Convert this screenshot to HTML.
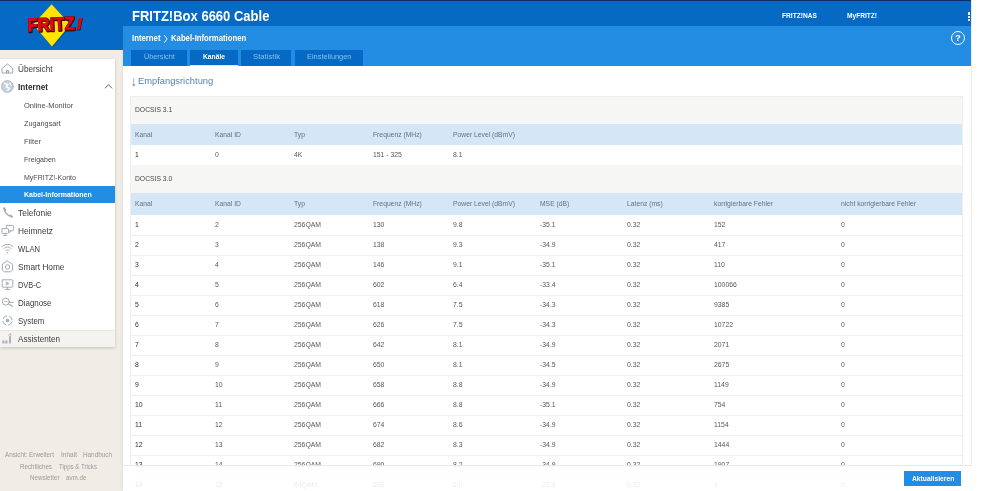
<!DOCTYPE html>
<html lang="de"><head><meta charset="utf-8"><title>FRITZ!Box 6660 Cable</title>
<style>
html,body{margin:0;padding:0}
body{width:999px;height:491px;overflow:hidden;background:#fff;position:relative;font-family:"Liberation Sans",sans-serif}
.t{position:absolute;white-space:nowrap;transform-origin:0 50%;display:block}
.abs{position:absolute}
#root{position:absolute;left:0;top:0;width:999px;height:491px;will-change:transform}
</style></head><body><div id="root">

<div class="abs" style="left:0;top:0;width:972px;height:491px;background:#f0ede7"></div>
<div class="abs" style="left:0;top:0;width:972px;height:50px;background:#066ac4"></div>
<div class="abs" style="left:0;top:0;width:972px;height:1px;background:#0c2f63"></div>
<div class="abs" style="left:123px;top:26.3px;width:849px;height:465px;background:#fff;box-shadow:-1px 0 2px rgba(120,110,90,.10)"></div>
<div class="abs" style="left:123px;top:26.3px;width:849px;height:40.1px;background:#238de3"></div>
<div class="abs" style="left:971.4px;top:0;width:28px;height:491px;background:#fff;border-left:1px solid #efebe7;box-sizing:border-box"></div>
<svg class="abs" style="left:20px;top:1px" width="70" height="49" viewBox="20 1 70 49">
<polygon points="52.6,5.6 71.5,25.4 53,47.6 34.2,25.4" fill="#0a3f78" opacity=".55"/>
<polygon points="51.6,4.3 70.3,24.4 52,46.4 33.2,24.4" fill="#ffe500"/>
<g font-family="Liberation Sans, sans-serif" font-weight="bold" stroke-linejoin="round">
<g transform="translate(27.8,31.6) rotate(-2.5)">
<text x="0.5" y="0.6" font-size="18.6" textLength="47.2" lengthAdjust="spacingAndGlyphs" fill="#3a0508" stroke="#3a0508" stroke-width="2.1">FRITZ</text>
<text x="0" y="0" font-size="18.6" textLength="47.2" lengthAdjust="spacingAndGlyphs" fill="#e30613" stroke="#e30613" stroke-width=".6">FRITZ</text>
</g>
<g transform="translate(76.2,29) rotate(-2.5) skewX(-12)">
<text x="0.4" y="0.5" font-size="15" fill="#3a0508" stroke="#3a0508" stroke-width="1.7">!</text>
<text x="0" y="0" font-size="15" fill="#e30613" stroke="#e30613" stroke-width="1.1">!</text>
</g></g></svg>
<span class="t" style="left:131.60px;top:6.77px;font-size:14.20px;line-height:18.46px;color:#fff;font-weight:bold;transform:scaleX(0.9172);">FRITZ!Box 6660 Cable</span>
<span class="t" style="left:782.00px;top:10.96px;font-size:7.60px;line-height:9.88px;color:#fff;font-weight:bold;transform:scaleX(0.8728);">FRITZ!NAS</span>
<span class="t" style="left:846.70px;top:10.96px;font-size:7.60px;line-height:9.88px;color:#fff;font-weight:bold;transform:scaleX(0.8667);">MyFRITZ!</span>
<div class="abs" style="left:967.6px;top:12.2px;width:2.4px;height:2.4px;background:#fff;border-radius:0.6px"></div>
<div class="abs" style="left:967.6px;top:15.6px;width:2.4px;height:2.4px;background:#fff;border-radius:0.6px"></div>
<div class="abs" style="left:967.6px;top:19.0px;width:2.4px;height:2.4px;background:#fff;border-radius:0.6px"></div>
<span class="t" style="left:131.70px;top:33.14px;font-size:8.40px;line-height:10.92px;color:#fff;font-weight:bold;transform:scaleX(0.9286);">Internet</span>
<svg class="abs" style="left:163px;top:33.5px" width="6" height="10" viewBox="0 0 6 10"><path d="M1.2 1.2 L4.2 5 L1.2 8.8" fill="none" stroke="#fff" stroke-width="0.9"/></svg>
<span class="t" style="left:170.80px;top:33.14px;font-size:8.40px;line-height:10.92px;color:#fff;font-weight:bold;transform:scaleX(0.9233);">Kabel-Informationen</span>
<div class="abs" style="left:950.5px;top:31px;width:12px;height:12px;border:1.3px solid #fff;border-radius:50%;"></div>
<span class="t" style="left:954.90px;top:32.12px;font-size:9.50px;line-height:12.35px;color:#fff;font-weight:bold;">?</span>
<div class="abs" style="left:131.0px;top:50.2px;width:56.3px;height:16px;background:#066ac4;"></div>
<div class="abs" style="left:190.3px;top:50.2px;width:47.4px;height:16px;background:#066ac4;box-shadow:inset 0 -1px 0 #d8f0e0;"></div>
<div class="abs" style="left:241.0px;top:50.2px;width:50.3px;height:16px;background:#066ac4;"></div>
<div class="abs" style="left:295.0px;top:50.2px;width:67.7px;height:16px;background:#066ac4;"></div>
<span class="t" style="left:143.80px;top:51.93px;font-size:7.80px;line-height:10.14px;color:#86c0ef;transform:scaleX(0.9319);">Übersicht</span>
<span class="t" style="left:203.00px;top:51.93px;font-size:7.80px;line-height:10.14px;color:#fff;font-weight:bold;transform:scaleX(0.8602);">Kanäle</span>
<span class="t" style="left:252.65px;top:51.93px;font-size:7.80px;line-height:10.14px;color:#86c0ef;transform:scaleX(0.9887);">Statistik</span>
<span class="t" style="left:306.60px;top:51.93px;font-size:7.80px;line-height:10.14px;color:#86c0ef;transform:scaleX(0.9502);">Einstellungen</span>
<div class="abs" style="left:0;top:59px;width:115px;height:288px;background:#fff;box-shadow:0 1px 3px rgba(90,80,60,.28)"></div>
<div class="abs" style="left:0;top:329.5px;width:115px;height:17.5px;background:#f4f3f0;border-top:1px solid #e9e7e3;box-sizing:border-box"></div>
<div class="abs" style="left:0;top:185.8px;width:115px;height:17.2px;background:#238de3"></div>
<span class="t" style="left:18.40px;top:64.01px;font-size:8.60px;line-height:11.18px;color:#3c3c3c;transform:scaleX(0.9498);">Übersicht</span>
<span class="t" style="left:18.40px;top:81.91px;font-size:8.60px;line-height:11.18px;color:#2d2d2d;font-weight:bold;transform:scaleX(0.9514);">Internet</span>
<span class="t" style="left:18.40px;top:207.71px;font-size:8.60px;line-height:11.18px;color:#3c3c3c;transform:scaleX(0.9790);">Telefonie</span>
<span class="t" style="left:18.40px;top:225.71px;font-size:8.60px;line-height:11.18px;color:#3c3c3c;transform:scaleX(0.9636);">Heimnetz</span>
<span class="t" style="left:18.40px;top:243.71px;font-size:8.60px;line-height:11.18px;color:#3c3c3c;transform:scaleX(0.8854);">WLAN</span>
<span class="t" style="left:18.40px;top:261.71px;font-size:8.60px;line-height:11.18px;color:#3c3c3c;transform:scaleX(0.9635);">Smart Home</span>
<span class="t" style="left:18.40px;top:279.71px;font-size:8.60px;line-height:11.18px;color:#3c3c3c;transform:scaleX(0.8596);">DVB-C</span>
<span class="t" style="left:18.40px;top:297.71px;font-size:8.60px;line-height:11.18px;color:#3c3c3c;transform:scaleX(0.9220);">Diagnose</span>
<span class="t" style="left:18.40px;top:315.71px;font-size:8.60px;line-height:11.18px;color:#3c3c3c;transform:scaleX(0.9243);">System</span>
<span class="t" style="left:18.40px;top:333.71px;font-size:8.60px;line-height:11.18px;color:#3c3c3c;transform:scaleX(0.9448);">Assistenten</span>
<span class="t" style="left:24.30px;top:100.59px;font-size:7.70px;line-height:10.01px;color:#4a4a4a;transform:scaleX(0.9744);">Online-Monitor</span>
<span class="t" style="left:24.30px;top:118.59px;font-size:7.70px;line-height:10.01px;color:#4a4a4a;transform:scaleX(0.9449);">Zugangsart</span>
<span class="t" style="left:24.30px;top:136.60px;font-size:7.70px;line-height:10.01px;color:#4a4a4a;transform:scaleX(0.9936);">Filter</span>
<span class="t" style="left:24.30px;top:154.60px;font-size:7.70px;line-height:10.01px;color:#4a4a4a;transform:scaleX(0.9172);">Freigaben</span>
<span class="t" style="left:24.30px;top:172.60px;font-size:7.70px;line-height:10.01px;color:#4a4a4a;transform:scaleX(0.9139);">MyFRITZ!-Konto</span>
<span class="t" style="left:24.30px;top:189.50px;font-size:7.70px;line-height:10.01px;color:#fff;font-weight:bold;transform:scaleX(0.9057);">Kabel-Informationen</span>
<svg class="abs" style="left:103.5px;top:83px" width="9" height="7" viewBox="0 0 9 7"><path d="M1 5.3 L4.5 1.6 L8 5.3" fill="none" stroke="#555" stroke-width="0.9"/></svg>
<svg class="abs" style="left:1.0px;top:62.1px" width="13" height="13" viewBox="0 0 13 13" fill="none" stroke="#a3adb6" stroke-width="1" stroke-linecap="round" stroke-linejoin="round"><path d="M1.4 6 L6.5 2 L11.6 6 V11 H1.4 Z"/><path d="M5.6 10.8 V8.6 H7.4 V10.8" stroke="#8b959e"/></svg>
<svg class="abs" style="left:1.0px;top:80.2px" width="13" height="13" viewBox="0 0 13 13" fill="none" stroke="#a3adb6" stroke-width="1" stroke-linecap="round" stroke-linejoin="round"><circle cx="6.4" cy="6.5" r="5.9" fill="#c9d2da" stroke="#a9b5c0" stroke-width=".9"/><path d="M3.6 3.4 L6.6 4.4 L5.2 6.8 L8.2 8.2 L6.8 10.6" stroke="#fff" stroke-width="1.5"/><path d="M8.6 3.2 L9.8 5" stroke="#fff" stroke-width="1.1"/></svg>
<svg class="abs" style="left:1.0px;top:205.8px" width="13" height="13" viewBox="0 0 13 13" fill="none" stroke="#a3adb6" stroke-width="1" stroke-linecap="round" stroke-linejoin="round"><path d="M3.3 2.2 C2.6 5.6 6.6 10.2 10.8 10.6" stroke-width="1.5"/><path d="M3.2 2.4 L4.2 4 M9.2 9.7 L10.9 10.7" stroke-width="2.1"/></svg>
<svg class="abs" style="left:1.0px;top:224.0px" width="13" height="13" viewBox="0 0 13 13" fill="none" stroke="#a3adb6" stroke-width="1" stroke-linecap="round" stroke-linejoin="round"><rect x="5.2" y="1.4" width="7.2" height="5.4" rx=".7"/><path d="M9.6 6.8 L8.6 8.6"/><rect x="0.9" y="4.6" width="6.6" height="4.8" rx=".6" fill="#fff"/><path d="M2.6 11.4 H5.8 M4.2 9.4 V11.4"/></svg>
<svg class="abs" style="left:1.0px;top:241.8px" width="13" height="13" viewBox="0 0 13 13" fill="none" stroke="#a3adb6" stroke-width="1" stroke-linecap="round" stroke-linejoin="round"><path d="M1 4.6 C4 1.6 9 1.6 12 4.6"/><path d="M2.8 6.6 C5 4.6 8 4.6 10.2 6.6"/><path d="M4.7 8.5 C5.8 7.6 7.2 7.6 8.3 8.5"/><circle cx="6.5" cy="10.8" r=".8" fill="#a3adb6" stroke="none"/></svg>
<svg class="abs" style="left:1.0px;top:260.0px" width="13" height="13" viewBox="0 0 13 13" fill="none" stroke="#a3adb6" stroke-width="1" stroke-linecap="round" stroke-linejoin="round"><path d="M6.5 1 L11.6 4.4 V10 L9.8 11.8 H3.2 L1.4 10 V4.4 Z"/><circle cx="6.5" cy="7" r="2.2"/></svg>
<svg class="abs" style="left:1.0px;top:277.8px" width="13" height="13" viewBox="0 0 13 13" fill="none" stroke="#a3adb6" stroke-width="1" stroke-linecap="round" stroke-linejoin="round"><rect x="1.2" y="1.8" width="10.6" height="7.4" rx=".8"/><path d="M5.4 3.9 L8.2 5.5 L5.4 7.1 Z" fill="#a3adb6" stroke-width=".5"/><path d="M4.2 11.4 H8.8 M6.5 9.4 V11.2"/></svg>
<svg class="abs" style="left:1.0px;top:295.8px" width="13" height="13" viewBox="0 0 13 13" fill="none" stroke="#a3adb6" stroke-width="1" stroke-linecap="round" stroke-linejoin="round"><circle cx="4.8" cy="5.6" r="3.5"/><path d="M7.4 7.8 L11.6 10.4" stroke-width="1.2"/><path d="M8.4 6.4 H12.4"/><path d="M3.4 5.6 H6.2" stroke-width=".8"/></svg>
<svg class="abs" style="left:1.0px;top:314.0px" width="13" height="13" viewBox="0 0 13 13" fill="none" stroke="#a3adb6" stroke-width="1" stroke-linecap="round" stroke-linejoin="round"><circle cx="6.5" cy="6.5" r="1.8" fill="#a3adb6" stroke="none"/><circle cx="6.5" cy="6.5" r="4.7" stroke-dasharray="5.4 2" stroke-dashoffset="-1" stroke-linecap="butt"/></svg>
<svg class="abs" style="left:1.0px;top:331.8px" width="13" height="13" viewBox="0 0 13 13" fill="none" stroke="#a3adb6" stroke-width="1" stroke-linecap="round" stroke-linejoin="round"><path d="M2.4 11.4 V8.6 M5.4 11.4 V8.6" stroke-width="2" stroke-linecap="butt"/><path d="M9 11.4 V4.2" stroke-width="1.8" stroke-linecap="butt"/><path d="M9.8 4 V1.6 L7.4 3.2" stroke-width=".8"/></svg>
<span class="t" style="left:5.00px;top:451.14px;font-size:6.40px;line-height:8.32px;color:#9b9b99;transform:scaleX(0.9841);">Ansicht: Erweitert</span>
<span class="t" style="left:60.50px;top:451.14px;font-size:6.40px;line-height:8.32px;color:#9b9b99;transform:scaleX(1.0220);">Inhalt</span>
<span class="t" style="left:83.00px;top:451.14px;font-size:6.40px;line-height:8.32px;color:#9b9b99;transform:scaleX(0.9940);">Handbuch</span>
<span class="t" style="left:20.00px;top:462.64px;font-size:6.40px;line-height:8.32px;color:#9b9b99;transform:scaleX(0.9674);">Rechtliches</span>
<span class="t" style="left:58.50px;top:462.64px;font-size:6.40px;line-height:8.32px;color:#9b9b99;transform:scaleX(0.9513);">Tipps &amp; Tricks</span>
<span class="t" style="left:30.00px;top:473.94px;font-size:6.40px;line-height:8.32px;color:#9b9b99;transform:scaleX(0.9759);">Newsletter</span>
<span class="t" style="left:66.30px;top:473.94px;font-size:6.40px;line-height:8.32px;color:#9b9b99;transform:scaleX(0.9768);">avm.de</span>
<span class="t" style="left:130.70px;top:72.14px;font-size:14.40px;line-height:18.72px;color:#4f759f;transform:scaleX(0.8000);">↓</span>
<span class="t" style="left:137.90px;top:75.95px;font-size:9.00px;line-height:11.70px;color:#5682b2;transform:scaleX(1.0367);">Empfangsrichtung</span>
<div class="abs" style="left:130px;top:96px;width:833px;height:395px;background:#fff"></div>
<div class="abs" style="left:130px;top:96.0px;width:833px;height:28.0px;background:#f6f6f4"></div>
<div class="abs" style="left:130px;top:124.0px;width:833px;height:20.6px;background:#d5e7f6"></div>
<div class="abs" style="left:130px;top:164.6px;width:833px;height:28.4px;background:#f6f6f4"></div>
<div class="abs" style="left:130px;top:193.0px;width:833px;height:21.6px;background:#d5e7f6"></div>
<div class="abs" style="left:130px;top:96px;width:833px;height:395px;border:1px solid #eeeeec;border-bottom:none;box-sizing:border-box"></div>
<span class="t" style="left:135.30px;top:105.12px;font-size:7.50px;line-height:9.75px;color:#484848;transform:scaleX(0.9000);">DOCSIS 3.1</span>
<span class="t" style="left:135.30px;top:174.12px;font-size:7.50px;line-height:9.75px;color:#484848;transform:scaleX(0.9000);">DOCSIS 3.0</span>
<span class="t" style="left:135.30px;top:129.72px;font-size:7.50px;line-height:9.75px;color:#5d7389;transform:scaleX(0.9000);">Kanal</span>
<span class="t" style="left:214.60px;top:129.72px;font-size:7.50px;line-height:9.75px;color:#5d7389;transform:scaleX(0.9000);">Kanal ID</span>
<span class="t" style="left:293.80px;top:129.72px;font-size:7.50px;line-height:9.75px;color:#5d7389;transform:scaleX(0.9000);">Typ</span>
<span class="t" style="left:373.10px;top:129.72px;font-size:7.50px;line-height:9.75px;color:#5d7389;transform:scaleX(0.9000);">Frequenz (MHz)</span>
<span class="t" style="left:452.60px;top:129.72px;font-size:7.50px;line-height:9.75px;color:#5d7389;transform:scaleX(0.9000);">Power Level (dBmV)</span>
<span class="t" style="left:135.30px;top:199.22px;font-size:7.50px;line-height:9.75px;color:#5d7389;transform:scaleX(0.9000);">Kanal</span>
<span class="t" style="left:214.60px;top:199.22px;font-size:7.50px;line-height:9.75px;color:#5d7389;transform:scaleX(0.9000);">Kanal ID</span>
<span class="t" style="left:293.80px;top:199.22px;font-size:7.50px;line-height:9.75px;color:#5d7389;transform:scaleX(0.9000);">Typ</span>
<span class="t" style="left:373.10px;top:199.22px;font-size:7.50px;line-height:9.75px;color:#5d7389;transform:scaleX(0.9000);">Frequenz (MHz)</span>
<span class="t" style="left:452.60px;top:199.22px;font-size:7.50px;line-height:9.75px;color:#5d7389;transform:scaleX(0.9000);">Power Level (dBmV)</span>
<span class="t" style="left:539.60px;top:199.22px;font-size:7.50px;line-height:9.75px;color:#5d7389;transform:scaleX(0.9000);">MSE (dB)</span>
<span class="t" style="left:626.80px;top:199.22px;font-size:7.50px;line-height:9.75px;color:#5d7389;transform:scaleX(0.9000);">Latenz (ms)</span>
<span class="t" style="left:713.80px;top:199.22px;font-size:7.50px;line-height:9.75px;color:#5d7389;transform:scaleX(0.9000);">korrigierbare Fehler</span>
<span class="t" style="left:840.60px;top:199.22px;font-size:7.50px;line-height:9.75px;color:#5d7389;transform:scaleX(0.9000);">nicht korrigierbare Fehler</span>
<span class="t" style="left:135.30px;top:150.06px;font-size:7.60px;line-height:9.88px;color:#2e2e2e;transform:scaleX(0.9000);">1</span>
<span class="t" style="left:214.60px;top:150.06px;font-size:7.60px;line-height:9.88px;color:#575757;transform:scaleX(0.9000);">0</span>
<span class="t" style="left:293.80px;top:150.06px;font-size:7.60px;line-height:9.88px;color:#575757;transform:scaleX(0.9000);">4K</span>
<span class="t" style="left:373.10px;top:150.06px;font-size:7.60px;line-height:9.88px;color:#575757;transform:scaleX(0.9000);">151 - 325</span>
<span class="t" style="left:452.60px;top:150.06px;font-size:7.60px;line-height:9.88px;color:#575757;transform:scaleX(0.9000);">8.1</span>
<span class="t" style="left:135.30px;top:220.26px;font-size:7.60px;line-height:9.88px;color:#2e2e2e;transform:scaleX(0.9000);">1</span>
<span class="t" style="left:214.60px;top:220.26px;font-size:7.60px;line-height:9.88px;color:#575757;transform:scaleX(0.9000);">2</span>
<span class="t" style="left:293.80px;top:220.26px;font-size:7.60px;line-height:9.88px;color:#575757;transform:scaleX(0.9000);">256QAM</span>
<span class="t" style="left:373.10px;top:220.26px;font-size:7.60px;line-height:9.88px;color:#575757;transform:scaleX(0.9000);">130</span>
<span class="t" style="left:452.60px;top:220.26px;font-size:7.60px;line-height:9.88px;color:#575757;transform:scaleX(0.9000);">9.8</span>
<span class="t" style="left:539.60px;top:220.26px;font-size:7.60px;line-height:9.88px;color:#575757;transform:scaleX(0.9000);">-35.1</span>
<span class="t" style="left:626.80px;top:220.26px;font-size:7.60px;line-height:9.88px;color:#575757;transform:scaleX(0.9000);">0.32</span>
<span class="t" style="left:713.80px;top:220.26px;font-size:7.60px;line-height:9.88px;color:#575757;transform:scaleX(0.9000);">152</span>
<span class="t" style="left:840.60px;top:220.26px;font-size:7.60px;line-height:9.88px;color:#575757;transform:scaleX(0.9000);">0</span>
<div class="abs" style="left:130px;top:234.5px;width:833px;height:1px;background:#efefed"></div>
<span class="t" style="left:135.30px;top:240.26px;font-size:7.60px;line-height:9.88px;color:#2e2e2e;transform:scaleX(0.9000);">2</span>
<span class="t" style="left:214.60px;top:240.26px;font-size:7.60px;line-height:9.88px;color:#575757;transform:scaleX(0.9000);">3</span>
<span class="t" style="left:293.80px;top:240.26px;font-size:7.60px;line-height:9.88px;color:#575757;transform:scaleX(0.9000);">256QAM</span>
<span class="t" style="left:373.10px;top:240.26px;font-size:7.60px;line-height:9.88px;color:#575757;transform:scaleX(0.9000);">138</span>
<span class="t" style="left:452.60px;top:240.26px;font-size:7.60px;line-height:9.88px;color:#575757;transform:scaleX(0.9000);">9.3</span>
<span class="t" style="left:539.60px;top:240.26px;font-size:7.60px;line-height:9.88px;color:#575757;transform:scaleX(0.9000);">-34.9</span>
<span class="t" style="left:626.80px;top:240.26px;font-size:7.60px;line-height:9.88px;color:#575757;transform:scaleX(0.9000);">0.32</span>
<span class="t" style="left:713.80px;top:240.26px;font-size:7.60px;line-height:9.88px;color:#575757;transform:scaleX(0.9000);">417</span>
<span class="t" style="left:840.60px;top:240.26px;font-size:7.60px;line-height:9.88px;color:#575757;transform:scaleX(0.9000);">0</span>
<div class="abs" style="left:130px;top:254.5px;width:833px;height:1px;background:#efefed"></div>
<span class="t" style="left:135.30px;top:260.26px;font-size:7.60px;line-height:9.88px;color:#2e2e2e;transform:scaleX(0.9000);">3</span>
<span class="t" style="left:214.60px;top:260.26px;font-size:7.60px;line-height:9.88px;color:#575757;transform:scaleX(0.9000);">4</span>
<span class="t" style="left:293.80px;top:260.26px;font-size:7.60px;line-height:9.88px;color:#575757;transform:scaleX(0.9000);">256QAM</span>
<span class="t" style="left:373.10px;top:260.26px;font-size:7.60px;line-height:9.88px;color:#575757;transform:scaleX(0.9000);">146</span>
<span class="t" style="left:452.60px;top:260.26px;font-size:7.60px;line-height:9.88px;color:#575757;transform:scaleX(0.9000);">9.1</span>
<span class="t" style="left:539.60px;top:260.26px;font-size:7.60px;line-height:9.88px;color:#575757;transform:scaleX(0.9000);">-35.1</span>
<span class="t" style="left:626.80px;top:260.26px;font-size:7.60px;line-height:9.88px;color:#575757;transform:scaleX(0.9000);">0.32</span>
<span class="t" style="left:713.80px;top:260.26px;font-size:7.60px;line-height:9.88px;color:#575757;transform:scaleX(0.9000);">110</span>
<span class="t" style="left:840.60px;top:260.26px;font-size:7.60px;line-height:9.88px;color:#575757;transform:scaleX(0.9000);">0</span>
<div class="abs" style="left:130px;top:274.5px;width:833px;height:1px;background:#efefed"></div>
<span class="t" style="left:135.30px;top:280.26px;font-size:7.60px;line-height:9.88px;color:#2e2e2e;transform:scaleX(0.9000);">4</span>
<span class="t" style="left:214.60px;top:280.26px;font-size:7.60px;line-height:9.88px;color:#575757;transform:scaleX(0.9000);">5</span>
<span class="t" style="left:293.80px;top:280.26px;font-size:7.60px;line-height:9.88px;color:#575757;transform:scaleX(0.9000);">256QAM</span>
<span class="t" style="left:373.10px;top:280.26px;font-size:7.60px;line-height:9.88px;color:#575757;transform:scaleX(0.9000);">602</span>
<span class="t" style="left:452.60px;top:280.26px;font-size:7.60px;line-height:9.88px;color:#575757;transform:scaleX(0.9000);">6.4</span>
<span class="t" style="left:539.60px;top:280.26px;font-size:7.60px;line-height:9.88px;color:#575757;transform:scaleX(0.9000);">-33.4</span>
<span class="t" style="left:626.80px;top:280.26px;font-size:7.60px;line-height:9.88px;color:#575757;transform:scaleX(0.9000);">0.32</span>
<span class="t" style="left:713.80px;top:280.26px;font-size:7.60px;line-height:9.88px;color:#575757;transform:scaleX(0.9000);">100066</span>
<span class="t" style="left:840.60px;top:280.26px;font-size:7.60px;line-height:9.88px;color:#575757;transform:scaleX(0.9000);">0</span>
<div class="abs" style="left:130px;top:294.5px;width:833px;height:1px;background:#efefed"></div>
<span class="t" style="left:135.30px;top:300.26px;font-size:7.60px;line-height:9.88px;color:#2e2e2e;transform:scaleX(0.9000);">5</span>
<span class="t" style="left:214.60px;top:300.26px;font-size:7.60px;line-height:9.88px;color:#575757;transform:scaleX(0.9000);">6</span>
<span class="t" style="left:293.80px;top:300.26px;font-size:7.60px;line-height:9.88px;color:#575757;transform:scaleX(0.9000);">256QAM</span>
<span class="t" style="left:373.10px;top:300.26px;font-size:7.60px;line-height:9.88px;color:#575757;transform:scaleX(0.9000);">618</span>
<span class="t" style="left:452.60px;top:300.26px;font-size:7.60px;line-height:9.88px;color:#575757;transform:scaleX(0.9000);">7.5</span>
<span class="t" style="left:539.60px;top:300.26px;font-size:7.60px;line-height:9.88px;color:#575757;transform:scaleX(0.9000);">-34.3</span>
<span class="t" style="left:626.80px;top:300.26px;font-size:7.60px;line-height:9.88px;color:#575757;transform:scaleX(0.9000);">0.32</span>
<span class="t" style="left:713.80px;top:300.26px;font-size:7.60px;line-height:9.88px;color:#575757;transform:scaleX(0.9000);">9385</span>
<span class="t" style="left:840.60px;top:300.26px;font-size:7.60px;line-height:9.88px;color:#575757;transform:scaleX(0.9000);">0</span>
<div class="abs" style="left:130px;top:314.5px;width:833px;height:1px;background:#efefed"></div>
<span class="t" style="left:135.30px;top:320.26px;font-size:7.60px;line-height:9.88px;color:#2e2e2e;transform:scaleX(0.9000);">6</span>
<span class="t" style="left:214.60px;top:320.26px;font-size:7.60px;line-height:9.88px;color:#575757;transform:scaleX(0.9000);">7</span>
<span class="t" style="left:293.80px;top:320.26px;font-size:7.60px;line-height:9.88px;color:#575757;transform:scaleX(0.9000);">256QAM</span>
<span class="t" style="left:373.10px;top:320.26px;font-size:7.60px;line-height:9.88px;color:#575757;transform:scaleX(0.9000);">626</span>
<span class="t" style="left:452.60px;top:320.26px;font-size:7.60px;line-height:9.88px;color:#575757;transform:scaleX(0.9000);">7.5</span>
<span class="t" style="left:539.60px;top:320.26px;font-size:7.60px;line-height:9.88px;color:#575757;transform:scaleX(0.9000);">-34.3</span>
<span class="t" style="left:626.80px;top:320.26px;font-size:7.60px;line-height:9.88px;color:#575757;transform:scaleX(0.9000);">0.32</span>
<span class="t" style="left:713.80px;top:320.26px;font-size:7.60px;line-height:9.88px;color:#575757;transform:scaleX(0.9000);">10722</span>
<span class="t" style="left:840.60px;top:320.26px;font-size:7.60px;line-height:9.88px;color:#575757;transform:scaleX(0.9000);">0</span>
<div class="abs" style="left:130px;top:334.5px;width:833px;height:1px;background:#efefed"></div>
<span class="t" style="left:135.30px;top:340.26px;font-size:7.60px;line-height:9.88px;color:#2e2e2e;transform:scaleX(0.9000);">7</span>
<span class="t" style="left:214.60px;top:340.26px;font-size:7.60px;line-height:9.88px;color:#575757;transform:scaleX(0.9000);">8</span>
<span class="t" style="left:293.80px;top:340.26px;font-size:7.60px;line-height:9.88px;color:#575757;transform:scaleX(0.9000);">256QAM</span>
<span class="t" style="left:373.10px;top:340.26px;font-size:7.60px;line-height:9.88px;color:#575757;transform:scaleX(0.9000);">642</span>
<span class="t" style="left:452.60px;top:340.26px;font-size:7.60px;line-height:9.88px;color:#575757;transform:scaleX(0.9000);">8.1</span>
<span class="t" style="left:539.60px;top:340.26px;font-size:7.60px;line-height:9.88px;color:#575757;transform:scaleX(0.9000);">-34.9</span>
<span class="t" style="left:626.80px;top:340.26px;font-size:7.60px;line-height:9.88px;color:#575757;transform:scaleX(0.9000);">0.32</span>
<span class="t" style="left:713.80px;top:340.26px;font-size:7.60px;line-height:9.88px;color:#575757;transform:scaleX(0.9000);">2071</span>
<span class="t" style="left:840.60px;top:340.26px;font-size:7.60px;line-height:9.88px;color:#575757;transform:scaleX(0.9000);">0</span>
<div class="abs" style="left:130px;top:354.5px;width:833px;height:1px;background:#efefed"></div>
<span class="t" style="left:135.30px;top:360.26px;font-size:7.60px;line-height:9.88px;color:#2e2e2e;transform:scaleX(0.9000);">8</span>
<span class="t" style="left:214.60px;top:360.26px;font-size:7.60px;line-height:9.88px;color:#575757;transform:scaleX(0.9000);">9</span>
<span class="t" style="left:293.80px;top:360.26px;font-size:7.60px;line-height:9.88px;color:#575757;transform:scaleX(0.9000);">256QAM</span>
<span class="t" style="left:373.10px;top:360.26px;font-size:7.60px;line-height:9.88px;color:#575757;transform:scaleX(0.9000);">650</span>
<span class="t" style="left:452.60px;top:360.26px;font-size:7.60px;line-height:9.88px;color:#575757;transform:scaleX(0.9000);">8.1</span>
<span class="t" style="left:539.60px;top:360.26px;font-size:7.60px;line-height:9.88px;color:#575757;transform:scaleX(0.9000);">-34.5</span>
<span class="t" style="left:626.80px;top:360.26px;font-size:7.60px;line-height:9.88px;color:#575757;transform:scaleX(0.9000);">0.32</span>
<span class="t" style="left:713.80px;top:360.26px;font-size:7.60px;line-height:9.88px;color:#575757;transform:scaleX(0.9000);">2675</span>
<span class="t" style="left:840.60px;top:360.26px;font-size:7.60px;line-height:9.88px;color:#575757;transform:scaleX(0.9000);">0</span>
<div class="abs" style="left:130px;top:374.5px;width:833px;height:1px;background:#efefed"></div>
<span class="t" style="left:135.30px;top:380.26px;font-size:7.60px;line-height:9.88px;color:#2e2e2e;transform:scaleX(0.9000);">9</span>
<span class="t" style="left:214.60px;top:380.26px;font-size:7.60px;line-height:9.88px;color:#575757;transform:scaleX(0.9000);">10</span>
<span class="t" style="left:293.80px;top:380.26px;font-size:7.60px;line-height:9.88px;color:#575757;transform:scaleX(0.9000);">256QAM</span>
<span class="t" style="left:373.10px;top:380.26px;font-size:7.60px;line-height:9.88px;color:#575757;transform:scaleX(0.9000);">658</span>
<span class="t" style="left:452.60px;top:380.26px;font-size:7.60px;line-height:9.88px;color:#575757;transform:scaleX(0.9000);">8.8</span>
<span class="t" style="left:539.60px;top:380.26px;font-size:7.60px;line-height:9.88px;color:#575757;transform:scaleX(0.9000);">-34.9</span>
<span class="t" style="left:626.80px;top:380.26px;font-size:7.60px;line-height:9.88px;color:#575757;transform:scaleX(0.9000);">0.32</span>
<span class="t" style="left:713.80px;top:380.26px;font-size:7.60px;line-height:9.88px;color:#575757;transform:scaleX(0.9000);">1149</span>
<span class="t" style="left:840.60px;top:380.26px;font-size:7.60px;line-height:9.88px;color:#575757;transform:scaleX(0.9000);">0</span>
<div class="abs" style="left:130px;top:394.5px;width:833px;height:1px;background:#efefed"></div>
<span class="t" style="left:135.30px;top:400.26px;font-size:7.60px;line-height:9.88px;color:#2e2e2e;transform:scaleX(0.9000);">10</span>
<span class="t" style="left:214.60px;top:400.26px;font-size:7.60px;line-height:9.88px;color:#575757;transform:scaleX(0.9000);">11</span>
<span class="t" style="left:293.80px;top:400.26px;font-size:7.60px;line-height:9.88px;color:#575757;transform:scaleX(0.9000);">256QAM</span>
<span class="t" style="left:373.10px;top:400.26px;font-size:7.60px;line-height:9.88px;color:#575757;transform:scaleX(0.9000);">666</span>
<span class="t" style="left:452.60px;top:400.26px;font-size:7.60px;line-height:9.88px;color:#575757;transform:scaleX(0.9000);">8.8</span>
<span class="t" style="left:539.60px;top:400.26px;font-size:7.60px;line-height:9.88px;color:#575757;transform:scaleX(0.9000);">-35.1</span>
<span class="t" style="left:626.80px;top:400.26px;font-size:7.60px;line-height:9.88px;color:#575757;transform:scaleX(0.9000);">0.32</span>
<span class="t" style="left:713.80px;top:400.26px;font-size:7.60px;line-height:9.88px;color:#575757;transform:scaleX(0.9000);">754</span>
<span class="t" style="left:840.60px;top:400.26px;font-size:7.60px;line-height:9.88px;color:#575757;transform:scaleX(0.9000);">0</span>
<div class="abs" style="left:130px;top:414.5px;width:833px;height:1px;background:#efefed"></div>
<span class="t" style="left:135.30px;top:420.26px;font-size:7.60px;line-height:9.88px;color:#2e2e2e;transform:scaleX(0.9000);">11</span>
<span class="t" style="left:214.60px;top:420.26px;font-size:7.60px;line-height:9.88px;color:#575757;transform:scaleX(0.9000);">12</span>
<span class="t" style="left:293.80px;top:420.26px;font-size:7.60px;line-height:9.88px;color:#575757;transform:scaleX(0.9000);">256QAM</span>
<span class="t" style="left:373.10px;top:420.26px;font-size:7.60px;line-height:9.88px;color:#575757;transform:scaleX(0.9000);">674</span>
<span class="t" style="left:452.60px;top:420.26px;font-size:7.60px;line-height:9.88px;color:#575757;transform:scaleX(0.9000);">8.6</span>
<span class="t" style="left:539.60px;top:420.26px;font-size:7.60px;line-height:9.88px;color:#575757;transform:scaleX(0.9000);">-34.9</span>
<span class="t" style="left:626.80px;top:420.26px;font-size:7.60px;line-height:9.88px;color:#575757;transform:scaleX(0.9000);">0.32</span>
<span class="t" style="left:713.80px;top:420.26px;font-size:7.60px;line-height:9.88px;color:#575757;transform:scaleX(0.9000);">1154</span>
<span class="t" style="left:840.60px;top:420.26px;font-size:7.60px;line-height:9.88px;color:#575757;transform:scaleX(0.9000);">0</span>
<div class="abs" style="left:130px;top:434.5px;width:833px;height:1px;background:#efefed"></div>
<span class="t" style="left:135.30px;top:440.26px;font-size:7.60px;line-height:9.88px;color:#2e2e2e;transform:scaleX(0.9000);">12</span>
<span class="t" style="left:214.60px;top:440.26px;font-size:7.60px;line-height:9.88px;color:#575757;transform:scaleX(0.9000);">13</span>
<span class="t" style="left:293.80px;top:440.26px;font-size:7.60px;line-height:9.88px;color:#575757;transform:scaleX(0.9000);">256QAM</span>
<span class="t" style="left:373.10px;top:440.26px;font-size:7.60px;line-height:9.88px;color:#575757;transform:scaleX(0.9000);">682</span>
<span class="t" style="left:452.60px;top:440.26px;font-size:7.60px;line-height:9.88px;color:#575757;transform:scaleX(0.9000);">8.3</span>
<span class="t" style="left:539.60px;top:440.26px;font-size:7.60px;line-height:9.88px;color:#575757;transform:scaleX(0.9000);">-34.9</span>
<span class="t" style="left:626.80px;top:440.26px;font-size:7.60px;line-height:9.88px;color:#575757;transform:scaleX(0.9000);">0.32</span>
<span class="t" style="left:713.80px;top:440.26px;font-size:7.60px;line-height:9.88px;color:#575757;transform:scaleX(0.9000);">1444</span>
<span class="t" style="left:840.60px;top:440.26px;font-size:7.60px;line-height:9.88px;color:#575757;transform:scaleX(0.9000);">0</span>
<div class="abs" style="left:130px;top:454.5px;width:833px;height:1px;background:#efefed"></div>
<span class="t" style="left:135.30px;top:460.26px;font-size:7.60px;line-height:9.88px;color:#2e2e2e;transform:scaleX(0.9000);">13</span>
<span class="t" style="left:214.60px;top:460.26px;font-size:7.60px;line-height:9.88px;color:#575757;transform:scaleX(0.9000);">14</span>
<span class="t" style="left:293.80px;top:460.26px;font-size:7.60px;line-height:9.88px;color:#575757;transform:scaleX(0.9000);">256QAM</span>
<span class="t" style="left:373.10px;top:460.26px;font-size:7.60px;line-height:9.88px;color:#575757;transform:scaleX(0.9000);">690</span>
<span class="t" style="left:452.60px;top:460.26px;font-size:7.60px;line-height:9.88px;color:#575757;transform:scaleX(0.9000);">8.2</span>
<span class="t" style="left:539.60px;top:460.26px;font-size:7.60px;line-height:9.88px;color:#575757;transform:scaleX(0.9000);">-34.9</span>
<span class="t" style="left:626.80px;top:460.26px;font-size:7.60px;line-height:9.88px;color:#575757;transform:scaleX(0.9000);">0.32</span>
<span class="t" style="left:713.80px;top:460.26px;font-size:7.60px;line-height:9.88px;color:#575757;transform:scaleX(0.9000);">1907</span>
<span class="t" style="left:840.60px;top:460.26px;font-size:7.60px;line-height:9.88px;color:#575757;transform:scaleX(0.9000);">0</span>
<div class="abs" style="left:130px;top:474.5px;width:833px;height:1px;background:#efefed"></div>
<span class="t" style="left:135.30px;top:480.26px;font-size:7.60px;line-height:9.88px;color:#2e2e2e;transform:scaleX(0.9000);">14</span>
<span class="t" style="left:214.60px;top:480.26px;font-size:7.60px;line-height:9.88px;color:#575757;transform:scaleX(0.9000);">15</span>
<span class="t" style="left:293.80px;top:480.26px;font-size:7.60px;line-height:9.88px;color:#575757;transform:scaleX(0.9000);">64QAM</span>
<span class="t" style="left:373.10px;top:480.26px;font-size:7.60px;line-height:9.88px;color:#575757;transform:scaleX(0.9000);">698</span>
<span class="t" style="left:452.60px;top:480.26px;font-size:7.60px;line-height:9.88px;color:#575757;transform:scaleX(0.9000);">2.0</span>
<span class="t" style="left:539.60px;top:480.26px;font-size:7.60px;line-height:9.88px;color:#575757;transform:scaleX(0.9000);">-23.9</span>
<span class="t" style="left:626.80px;top:480.26px;font-size:7.60px;line-height:9.88px;color:#575757;transform:scaleX(0.9000);">0.32</span>
<span class="t" style="left:713.80px;top:480.26px;font-size:7.60px;line-height:9.88px;color:#575757;transform:scaleX(0.9000);">1</span>
<span class="t" style="left:840.60px;top:480.26px;font-size:7.60px;line-height:9.88px;color:#575757;transform:scaleX(0.9000);">0</span>
<div class="abs" style="left:130px;top:494.5px;width:833px;height:1px;background:#efefed"></div>
<div class="abs" style="left:123px;top:465.4px;width:849px;height:26px;background:rgba(255,255,255,.87);border-top:1px solid #ece8e4;box-sizing:border-box"></div>
<div class="abs" style="left:904px;top:470.5px;width:57.4px;height:15.4px;background:#238de3"></div>
<span class="t" style="left:911.85px;top:473.63px;font-size:8.10px;line-height:10.53px;color:#fff;font-weight:bold;transform:scaleX(0.8316);">Aktualisieren</span>
</div></body></html>
